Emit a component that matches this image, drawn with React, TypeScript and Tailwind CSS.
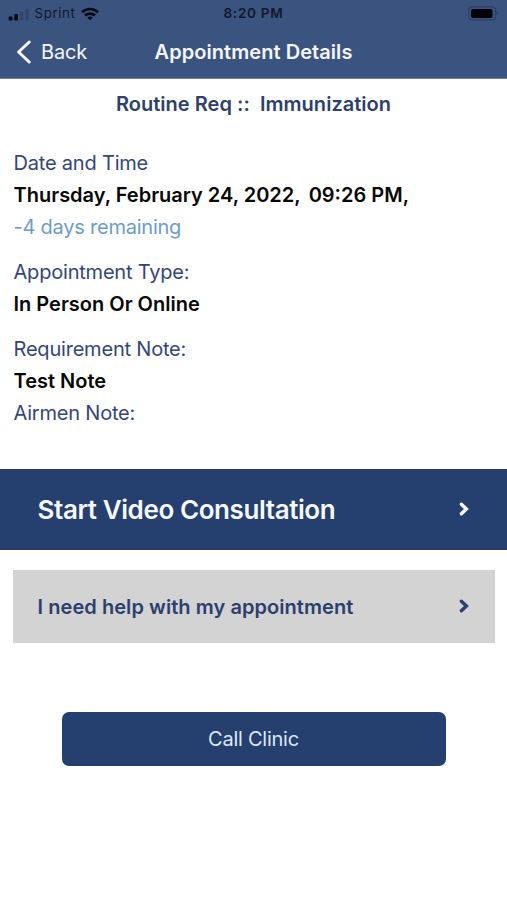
import type { ReactNode } from "react";

function StatusBar() {
  return (
    <div className="grid h-[27px] grid-cols-3 items-center px-2 text-[13.5px] leading-[27px] text-[#10182b]">
      <div className="flex items-center">
        <svg width="22" height="12" viewBox="0 0 22 12" className="mt-0.5">
          <rect x="0.7" y="7.5" width="3.8" height="4" rx="1" fill="#060a14" />
          <rect x="6.2" y="5" width="3.8" height="6.5" rx="1" fill="#060a14" />
          <rect x="11.7" y="2.5" width="3.8" height="9" rx="1" fill="#34456f" />
          <rect x="17.2" y="0" width="3.8" height="11.5" rx="1" fill="#34456f" />
        </svg>
        <span className="ml-[4.5px] tracking-[0.5px]">Sprint</span>
        <svg width="18" height="14" viewBox="0 0 18 14" fill="none" className="ml-[6px]" stroke="#060a14" strokeWidth="2.7">
          <path d="M1 5.2C5.4 0.9 12.6 0.9 17 5.2" />
          <path d="M4 8.5C6.8 5.9 11.2 5.9 14 8.5" />
          <path d="M9 13.2L6.2 10.5C7.8 9.1 10.2 9.1 11.8 10.5Z" fill="#060a14" stroke="none" />
        </svg>
      </div>
      <span className="text-center font-semibold tracking-[0.75px]">8:20 PM</span>
      <svg width="31" height="15" viewBox="0 0 31 15" className="justify-self-end">
        <rect x="0.7" y="0.9" width="27" height="13" rx="3.5" fill="none" stroke="#2c3d64" strokeWidth="1.2" />
        <rect x="3" y="2.9" width="21.5" height="9.2" rx="2" fill="#02040a" />
        <path d="M28.8 5.2C30.6 6 30.6 8.8 28.8 9.6Z" fill="#2c3d64" />
      </svg>
    </div>
  );
}

function Label({ children }: { children: ReactNode }) {
  return <div className="tracking-[-0.2px] text-[#34457a]">{children}</div>;
}

function Value({ children }: { children: ReactNode }) {
  return <div className="font-semibold text-[#080808]">{children}</div>;
}

function Chevron() {
  return (
    <svg width="10" height="14" viewBox="0 0 10 14" fill="none" stroke="currentColor" strokeWidth="3.4" strokeLinecap="round">
      <path d="M2.4 2.2L7.4 7L2.4 11.8" />
    </svg>
  );
}

export default function App() {
  return (
    <div className="flex h-[900px] w-[507px] flex-col overflow-hidden bg-white font-['Inter',sans-serif] text-[20px] leading-8 whitespace-pre">
      <header className="h-[79px] shrink-0 border-b border-[#7180a6] bg-[#3b547f]">
        <StatusBar />
        <div className="grid h-[50px] grid-cols-[1fr_auto_1fr] items-center text-[#f4f7ff]">
          <button className="flex items-center gap-[9px] pl-4">
            <svg width="16" height="24" viewBox="0 0 16 24" fill="none" stroke="currentColor" strokeWidth="3" strokeLinecap="round" strokeLinejoin="round">
              <path d="M13.2 2L2.6 12L13.2 22" />
            </svg>
            <span className="tracking-[-0.2px]">Back</span>
          </button>
          <h1 className="font-semibold tracking-[0.06px]">Appointment Details</h1>
        </div>
      </header>
      <h2 className="mt-[9px] text-center font-semibold tracking-[0.03px] text-[#2e3f6b]">
        <span className="[font-feature-settings:'calt'_0]">Routine Req ::  Immunization</span>
      </h2>
      <main className="mt-[27px] pl-[13.5px]">
        <section>
          <Label>Date and Time</Label>
          <Value><span>Thursday, February 24, 2022,</span><span className="ml-[8px]">09:26 PM,</span></Value>
          <div className="tracking-[-0.23px] text-[#6c9dc5]">-4 days remaining</div>
        </section>
        <section className="mt-[13px]">
          <Label>Appointment Type:</Label>
          <Value>In Person Or Online</Value>
        </section>
        <section className="mt-[13px]">
          <Label>Requirement Note:</Label>
          <Value>Test Note</Value>
          <Label>Airmen Note:</Label>
        </section>
      </main>
      <button className="mt-[40px] flex h-[81px] shrink-0 items-center justify-between bg-[#253f6e] pr-[38px] pb-px pl-[37.5px] text-[26px] font-semibold tracking-[-0.41px] text-[#f6f9ff]">
        <div className="pt-[2px]">Start Video Consultation</div>
        <Chevron />
      </button>
      <button className="mr-3 ml-[13px] mt-[19.5px] flex h-[73.5px] shrink-0 items-center justify-between bg-[#d3d3d3] pr-[26px] pl-[24.5px] font-semibold tracking-[0.06px] text-[#2b3f6e]">
        <div className="pt-[2px]">I need help with my appointment</div>
        <Chevron />
      </button>
      <button className="mx-auto mt-[68.5px] h-[54px] w-[384px] shrink-0 rounded-[7px] bg-[#253f6e] tracking-[-0.25px] text-[#dce8fb]">
        Call Clinic
      </button>
    </div>
  );
}
